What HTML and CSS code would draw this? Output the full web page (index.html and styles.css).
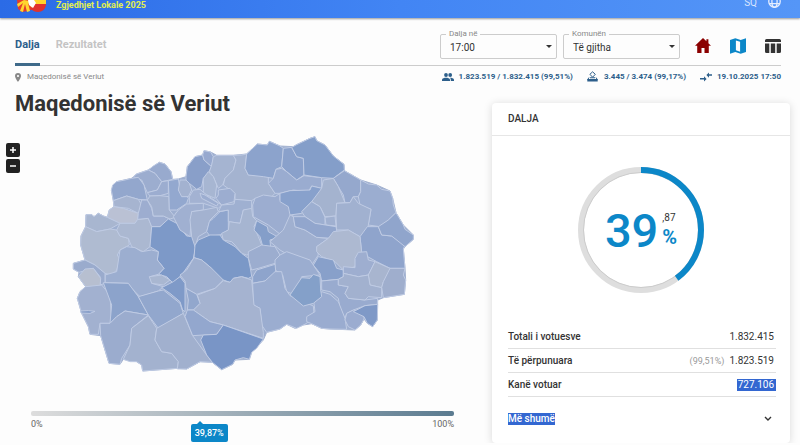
FILE: index.html
```
<!DOCTYPE html>
<html lang="sq">
<head>
  <meta charset="UTF-8" />
  <meta name="viewport" content="width=device-width, initial-scale=1.0" />
  <title>Zgjedhjet Lokale 2025</title>
  <link rel="stylesheet" href="styles.css">
</head>
<body>
  <!-- Header -->
  <header class="header">
    <svg class="logo" viewBox="0 0 32 14" aria-hidden="true">
      <path d="M1 0h17v9l-6 2-6 1-4-3z" fill="#e33a2e"/>
      <path d="M8 0l-7 4 1 3 5-4-3 8 3 1 2-8 2 8 3-1-2-8 4 5 2-3-5-4z" fill="#ffd52e"/>
      <path d="M17 0h13v4H17z" fill="#ffd52e"/>
      <path d="M17 4h13c0 5-4 8-8 8-3 0-5-1-7-3z" fill="#e0332f"/>
      <path d="M12 0h6l2 3-3 5-4-3z" fill="#fff"/>
    </svg>
    <span class="site-title">Zgjedhjet Lokale 2025</span>
    <span class="lang">SQ</span>
    <svg class="globe" viewBox="0 0 12 12" aria-hidden="true">
      <g fill="none" stroke="#e4edff" stroke-width="1.2">
        <circle cx="6" cy="6" r="5.3"/>
        <ellipse cx="6" cy="6" rx="2.4" ry="5.3"/>
        <path d="M1 4h10M1 8h10"/>
      </g>
    </svg>
  </header>

  <!-- Tabs and filters -->
  <div class="toolbar">
    <nav class="tabs">
      <a href="#dalja" class="tab active">Dalja</a>
      <a href="#rezultatet" class="tab">Rezultatet</a>
    </nav>
    <div class="filters">
      <div class="field">
        <label for="ora">Dalja në</label>
        <select id="ora"><option>17:00</option></select>
      </div>
      <div class="field">
        <label for="komuna">Komunën</label>
        <select id="komuna"><option>Të gjitha</option></select>
      </div>
    </div>
    <div class="views">
      <a href="#home" aria-label="Home"><svg viewBox="0 0 16 16"><path d="M8 0L0 7.800h2.200V15h4.300v-5h3v5h4.300V7.800H16l-2.600-2.500V1.200h-2v2.100z" fill="#8b0000"/></svg></a>
      <a href="#map" aria-label="Harta"><svg viewBox="0 0 16 16"><path fill-rule="evenodd" d="M0 2L5.300.3l5.400 1.800L16 .3V14l-5.300 1.700L5.300 14 0 15.700zM5.900 2.400v9.900l4.200 1.400V3.800z" fill="#0c87c8"/></svg></a>
      <a href="#table" aria-label="Tabela"><svg viewBox="0 0 16 16"><path d="M0 4V2.500Q0 1 1.500 1h13Q16 1 16 2.500V4zM0 5.500h4.300V15H1.500Q0 15 0 13.500zM5.800 5.500h4.400V15H5.800zM11.700 5.500H16v8q0 1.500-1.500 1.500h-2.800z" fill="#333"/></svg></a>
    </div>
  </div>

  <!-- Breadcrumb and status -->
  <div class="info">
    <span class="place">
      <svg class="pin" viewBox="0 0 6 9"><path fill-rule="evenodd" d="M3 0a3 3 0 0 0-3 3c0 2 3 6 3 6s3-4 3-6a3 3 0 0 0-3-3zm0 1.900a1.100 1.100 0 1 1 0 2.200 1.100 1.100 0 0 1 0-2.200z" fill="#888"/></svg>
      Maqedonisë së Veriut
    </span>
    <div class="stats">
      <span class="stat">
        <svg viewBox="0 0 12 12"><g fill="#2d5f8b"><circle cx="4" cy="4" r="1.900"/><circle cx="8.200" cy="4" r="1.900"/><path d="M0 10V8.700C0 7.300 2.500 6.700 4 6.700s4 .6 4 2V10zM8.800 10V8.700c0-.8-.4-1.400-.9-1.900 1.700 0 4.100.6 4.100 1.900V10z"/></g></svg>
        1.823.519 / 1.832.415 (99,51%)
      </span>
      <span class="stat">
        <svg viewBox="0 0 12 12"><path d="M2 6.500L.8 8.500h9.400L9 6.500" fill="none" stroke="#2d5f8b"/><path d="M5.600.8l2.700 2.500-2.700 2.900-2.700-2.900z" fill="none" stroke="#2d5f8b"/><path d="M.3 8h10.400v2.500H.3zM3 6.300h5v1H3z" fill="#2d5f8b"/></svg>
        3.445 / 3.474 (99,17%)
      </span>
      <span class="stat">
        <svg viewBox="0 0 12 12"><path d="M0 7h4V5.300L6.600 7.900 4 10.500V8.600H0zM12.500 3.200H9V1.500L6.400 4.100 9 6.700V4.700h3.500z" fill="#2d5f8b"/></svg>
        19.10.2025 17:50
      </span>
    </div>
  </div>

  <main class="content">
    <section class="map-panel">
      <h1>Maqedonisë së Veriut</h1>
      <div class="zoom-buttons">
        <button type="button" aria-label="Zoom in"><svg viewBox="0 0 8 8"><path d="M1 4h6M4 1v6" stroke="#fff" stroke-width="1.500"/></svg></button>
        <button type="button" aria-label="Zoom out"><svg viewBox="0 0 8 8"><path d="M1 4h6" stroke="#fff" stroke-width="1.500"/></svg></button>
      </div>

      <svg class="map" viewBox="210 390 1050 750" role="img" aria-label="Harta e komunave">
        <path class="land" d="M242 735L243 708 257 680 258 644 275 644 282 650 295 640 310 648 322 652 328 630 342 620 340 602 334 570 350 545 395 535 410 522 445 510 478 487 495 492 513 515 518 538 535 537 558 530 562 500 585 470 608 465 612 452 632 456 650 466 700 466 740 462 755 448 772 432 802 435 808 424 840 438 880 440 890 434 930 415 945 410 950 422 975 435 1000 468 1032 493 1033 512 1082 540 1130 555 1170 573 1178 595 1188 638 1210 675 1240 705 1240 718 1215 740 1210 747 1215 805 1217 840 1213 883 1150 893 1133 900 1132 960 1118 980 1102 970 1092 957 1082 975 1065 990 990 987 965 985 935 971 910 975 885 985 860 973 840 987 800 997 790 1020 755 1057 748 1078 705 1080 698 1093 665 1109 637 1087 600 1085 560 1107 532 1105 428 1113 425 1095 410 1085 370 1078 360 1093 327 1090 302 1007 270 1003 265 980 245 940 232 895 240 875 257 860 235 830 237 817 220 807 220 790 255 780z"/>
        <!-- North-west -->
        <g transform="translate(210 390)">
          <path fill="#98aace" d="M235 120L250 108 268 97 285 102 303 125 308 148 290 152 275 155 255 130z"/>
          <path fill="#9cadcf" d="M190 140L200 132 235 120 255 130 275 155 262 180 232 188 215 150z"/>
          <path fill="#93a7cd" d="M130 212L124 180 128 165 140 155 165 150 185 145 205 142 222 165 232 210 205 208 170 198 135 210z"/>
          <path fill="#9cadd0" d="M232 188L262 180 275 155 295 152 295 190 270 197 240 198z"/>
          <path fill="#a6b4d0" d="M132 230L130 212 170 198 205 208 215 225 205 250 175 235z"/>
          <path fill="#bac1d4" d="M112 262L118 240 132 230 160 235 205 250 203 268 195 280 150 280z"/>
          <path fill="#a8b6d0" d="M47 290L48 254 65 254 72 260 85 250 100 258 112 262 150 280 120 297 80 305z"/>
          <path fill="#afbbd1" d="M32 345L33 318 47 290 80 305 120 297 140 300 150 318 175 325 178 345 150 360 142 375 150 390 140 420 125 435 105 430 75 405 45 390z"/>
          <path fill="#abb8d1" d="M150 280L195 280 203 268 235 265 245 290 240 350 220 365 185 350 175 325 150 318 140 300z"/>
          <path fill="#9dadd0" d="M215 210L232 210 245 235 250 258 280 258 300 267 270 290 245 290 235 265 203 268 205 250z"/>
          <path fill="#a2b1cf" d="M240 198L270 197 297 200 298 240 316 262 300 267 280 258 250 258 245 230 232 210z"/>
          <path fill="#93a8cf" d="M295 152L325 147 330 175 345 190 355 205 350 220 320 240 298 240 297 200z"/>
          <path fill="#9aacd0" d="M316 250L350 225 365 222 365 325 350 318 320 280z"/>
          <path fill="#7d99c8" d="M245 290L270 290 295 267 320 280 350 318 378 320 378 350 370 385 335 435 310 460 290 440 265 433 282 415 262 390 265 365 240 350z"/>
        </g>
        <!-- Skopje and the north -->
        <g transform="translate(540 390)">
          <path fill="#a3b2d0" d="M0 150L18 150 28 160 35 180 25 200 5 200 -5 180z"/>
          <path fill="#899fc9" d="M18 150L18 140 22 110 45 80 68 75 72 90 95 110 85 130 70 145 65 170 50 178 28 160z"/>
          <path fill="#97a9cf" d="M68 75L72 62 92 66 100 80 95 110 72 90z"/>
          <path fill="#a5b4d1" d="M100 80L110 76 160 76 168 90 160 120 135 145 128 165 115 175 100 140 88 125 95 105z"/>
          <path fill="#a4b3d0" d="M160 76L185 75 200 72 195 115 205 135 265 135 265 160 285 190 270 205 225 205 215 212 165 210 165 190 130 165 135 145 160 120 168 90z"/>
          <path fill="#8ca3cc" d="M200 72L215 58 232 42 262 45 268 34 300 48 310 55 305 110 288 118 280 145 250 140 205 135 195 115z"/>
          <path fill="#8aa1cb" d="M310 55L335 52 350 80 370 85 372 135 350 150 320 125 305 110z"/>
          <path fill="#9aacd0" d="M288 118L305 115 320 125 350 150 372 137 425 143 425 175 395 168 385 185 340 180 300 190 285 190 265 160 280 145z"/>
          <path fill="#9cadd0" d="M225 205L250 195 285 200 300 190 300 210 325 230 345 270 310 320 265 285 220 260 218 225z"/>
          <path fill="#a7b6d2" d="M70 145L85 125 100 140 110 165 105 205 70 190z"/>
          <path fill="#9cadd0" d="M115 180L150 175 165 190 162 215 125 225 108 205 115 195z"/>
          <path fill="#a3b2d2" d="M28 200L40 180 60 178 80 195 125 225 115 235 70 220 28 220z"/>
          <path fill="#9cadd0" d="M60 190L75 195 115 220 110 228 65 205z"/>
          <path fill="#a0b0d1" d="M-5 240L20 222 70 220 70 240 35 245 30 320 0 300 -20 260z"/>
          <path fill="#a3b2d0" d="M35 245L70 240 110 232 115 245 90 270 80 305 55 320 45 350 35 320 30 270z"/>
          <path fill="#8fa5cd" d="M100 265L120 245 145 240 145 300 120 315 90 318 80 305 88 275z"/>
          <path fill="#9fb0d1" d="M125 225L162 222 165 208 215 212 215 240 190 240 180 280 145 275 145 240 115 245z"/>
          <path fill="#a6b5d1" d="M215 235L218 260 230 272 222 290 235 320 245 345 220 370 200 375 185 370 165 345 155 335 130 330 125 310 145 300 148 275 180 280 190 240z"/>
          <path fill="#849ec9" d="M230 272L262 290 265 305 295 322 270 330 272 355 250 355 240 320 222 300z"/>
        </g>
        <!-- North-east -->
        <g transform="translate(870 390)">
          <path fill="#849ec9" d="M5 52L20 44 60 25 75 20 80 32 105 45 130 78 162 103 163 120 130 145 95 143 42 135 40 85 20 80z"/>
          <path fill="#88a1cc" d="M-30 190L0 182 60 180 65 168 95 175 85 200 65 215 40 240 35 250 0 255 -5 230 -30 215z"/>
          <path fill="#95a8cd" d="M163 122L212 150 212 185 205 200 190 200 180 218 165 218 160 195 145 170 130 145z"/>
          <path fill="#9badd0" d="M212 150L235 162 260 165 275 178 300 183 308 205 310 225 318 248 295 270 270 290 235 285 243 238 210 225 205 200 212 185z"/>
          <path fill="#a4b3cf" d="M100 150L130 145 145 170 165 218 140 220 138 258 105 260 90 230 65 215 95 175z"/>
          <path fill="#a1b1d0" d="M140 220L180 218 190 200 205 220 243 238 235 285 232 310 210 320 175 300 140 300 138 258z"/>
          <path fill="#9dafd1" d="M65 215L90 230 105 262 105 285 75 280 45 260 35 245z"/>
          <path fill="#a0b0d0" d="M105 262L135 258 138 288 108 285z"/>
          <path fill="#a0b0d0" d="M0 255L10 260 15 290 45 300 80 322 115 325 80 350 85 375 65 405 20 390 -30 360 -60 335 -20 300z"/>
          <path fill="#92a6cd" d="M10 260L45 260 75 280 138 290 140 300 125 325 80 322 45 300 15 290z"/>
          <path fill="#8fa4cc" d="M232 290L265 290 275 315 305 318 345 345 340 357 345 415 300 415 260 395 215 370 210 320z"/>
          <path fill="#90a5cc" d="M318 248L340 285 345 298 370 315 370 328 345 350 305 318 275 315 265 290 295 270z"/>
          <path fill="#adb9d1" d="M80 350L115 325 130 305 175 300 210 320 215 365 200 385 195 410 160 420 135 395 95 380 80 365z"/>
        </g>
        <!-- South-west -->
        <g transform="translate(210 735)">
          <path fill="#9caed0" d="M150 15L170 5 195 8 215 20 245 15 265 20 262 45 282 70 265 88 240 95 245 115 280 125 265 138 210 155 185 130 175 115 105 113 105 90 140 80z"/>
          <path fill="#9aabcd" d="M10 72L10 55 45 45 75 60 105 85 105 115 90 120 90 95 70 70 27 82z"/>
          <path fill="#b7bfd0" d="M25 95L45 72 70 70 92 100 90 125 47 125z"/>
          <path fill="#a2b1d0" d="M22 160L30 140 47 125 95 120 120 150 125 235 90 235 85 268 60 268 55 245 35 205z"/>
          <path fill="#8ca3cb" d="M100 113L175 115 205 155 235 210 165 198 140 215 120 235 125 180z"/>
          <path fill="#92a7cd" d="M205 155L265 138 280 135 330 175 340 205 265 250 235 210z"/>
          <path fill="#a9b7d1" d="M238 95L275 90 300 105 280 120 245 115z"/>
          <path fill="#7f9ac8" d="M275 128L310 110 330 95 345 115 345 200 338 195 330 170 300 145z"/>
          <path fill="#7f98c5" d="M32 198L55 197 75 199 60 205 33 204z"/>
          <path fill="#9bacce" d="M90 235L120 235 140 215 165 198 235 210 185 250 180 300 155 340 150 358 117 355 92 272z"/>
          <path fill="#a3b2cf" d="M185 250L235 212 260 250 255 285 275 320 305 325 325 350 322 370 218 378 215 360 200 350 180 350 160 343 180 300z"/>
          <path fill="#a1b0ce" d="M260 250L340 205 368 272 410 330 427 352 390 350 350 372 322 372 325 350 305 325 275 320 255 285z"/>
        </g>
        <!-- Centre and south -->
        <g transform="translate(540 735)">
          <path fill="#9cadcf" d="M205 40L205 20 245 0 285 5 300 30 285 55 235 70 215 75z"/>
          <path fill="#7b98c7" d="M45 0L55 -15 90 -30 120 -30 130 -15 165 5 185 25 205 40 212 75 215 95 205 100 185 95 160 100 150 112 130 105 105 90 95 70 65 45 42 38z"/>
          <path fill="#9badd0" d="M300 30L320 20 390 45 400 60 420 90 365 95 345 150 320 140 308 90 285 75 285 45z"/>
          <path fill="#8ea4cc" d="M218 95L230 75 285 58 288 85 255 108 218 115z"/>
          <path fill="#9badd0" d="M218 115L255 108 285 80 305 80 315 130 330 152 400 183 402 205 380 235 350 250 320 238 300 252 260 262 245 240 240 190 220 180z"/>
          <path fill="#a5b3d0" d="M52 150L105 130 130 107 150 112 160 100 185 95 215 105 222 180 240 190 250 262 250 280 130 240 90 230 40 195 60 175z"/>
          <path fill="#a0b0d0" d="M42 38L65 45 95 70 130 105 105 130 50 148 18 130 15 108 0 90 20 75z"/>
          <path fill="#92a7cd" d="M18 130L50 148 60 175 40 195 22 195 25 165z"/>
          <path fill="#93a7ce" d="M22 195L40 195 90 230 130 240 110 268 70 270 38 272 15 215z"/>
          <path fill="#7995c6" d="M70 270L110 268 130 240 250 282 230 310 215 322 208 343 190 338 165 345 158 358 125 374 97 352 80 330 62 285z"/>
        </g>
        <!-- South-east -->
        <g transform="translate(870 735)">
          <path fill="#88a0ca" d="M70 60L85 35 130 45 140 70 160 75 160 95 145 103 95 108 90 85z"/>
          <path fill="#9eaed0" d="M160 65L195 68 195 40 205 22 230 20 235 45 255 50 235 90 205 95 160 85z"/>
          <path fill="#a8b5cf" d="M255 50L300 70 300 85 280 110 275 128 240 120 235 90z"/>
          <path fill="#9faecd" d="M300 70L345 70 340 90 347 105 343 148 280 158 275 128 280 110z"/>
          <path fill="#99abcf" d="M95 108L145 103 145 120 175 125 165 145 175 160 225 165 263 160 262 178 225 182 190 195 170 205 165 220 150 190 145 160 120 140 95 135z"/>
          <path fill="#a2b1cf" d="M160 85L205 95 235 90 240 120 275 128 275 158 235 155 225 165 175 160 165 145 175 125 145 120 145 103 160 95z"/>
          <path fill="#9aacd0" d="M95 140L120 148 145 170 165 220 170 253 120 252 95 250 65 236 50 230 50 215 75 200 72 175z"/>
          <path fill="#9bacd0" d="M170 205L190 195 222 215 222 222 212 240 195 255 175 245 165 225z"/>
          <path fill="#7f99c7" d="M225 182L263 178 262 225 248 245 232 235 222 215 190 200z"/>
          <path fill="#84a0c9" d="M0 150L20 120 35 98 60 100 70 88 90 95 92 135 95 155 70 175 40 183z"/>
        </g>
      </svg>

      <div class="scale">
        <div class="scale-bar"></div>
        <div class="scale-labels"><span>0%</span><span>100%</span></div>
        <div class="marker" style="left: 39.87%">39,87%</div>
      </div>
    </section>

    <!-- Turnout card -->
    <section class="card">
      <h2>DALJA</h2>
      <div class="donut">
        <svg viewBox="0 0 126 126" aria-hidden="true">
          <circle class="track" cx="63" cy="63" r="60"/>
          <circle class="track-inner" cx="63" cy="63" r="57.500"/>
          <circle class="progress" cx="63" cy="63" r="60" pathLength="100" stroke-dasharray="39.87 100" transform="rotate(-90 63 63)"/>
        </svg>
        <div class="percent">
          <span class="whole">39</span>
          <span class="rest"><span class="decimals">,87</span><span class="sign">%</span></span>
        </div>
      </div>
      <dl class="totals">
        <div class="row"><dt>Totali i votuesve</dt><dd>1.832.415</dd></div>
        <div class="row"><dt>Të përpunuara</dt><dd><small>(99,51%)</small>1.823.519</dd></div>
        <div class="row"><dt>Kanë votuar</dt><dd class="selected">727.106</dd></div>
      </dl>
      <button type="button" class="more">
        <span class="selected">Më shumë</span>
        <svg viewBox="0 0 8 6"><path d="M1 1l3 3 3-3" fill="none" stroke="#333" stroke-width="1.400"/></svg>
      </button>
    </section>
  </main>
</body>
</html>
```

FILE: styles.css
```
* {
  box-sizing: border-box;
}
body {
  margin: 0;
  background: #fdfdfd;
  color: #333;
  font-family: Roboto, Arial, sans-serif;
  font-size: 10px;
}
svg {
  display: block;
}
a {
  text-decoration: none;
}

/* ===== Header ===== */
.header {
  display: flex;
  align-items: flex-start;
  height: 18px;
  padding: 0 19px 0 16px;
  background: linear-gradient(90deg, #2b6be6, #4285f4 50%, #5596f7);
  box-shadow: 0 1px 2px rgba(0, 0, 0, 0.4);
  line-height: 11px;
}
.logo {
  width: 32px;
  height: 14px;
}
.site-title {
  margin-left: 8px;
  color: #e3f04d;
  font-size: 9px;
  font-weight: 700;
}
.lang {
  margin: -3px 11px 0 auto;
  color: #d8e6ff;
}
.globe {
  width: 13px;
  height: 13px;
  margin-top: -5px;
}

/* ===== Tabs and filters ===== */
.toolbar {
  display: flex;
  height: 48px;
  margin: 0 19px 0 15px;
  border-bottom: 1px solid #ccc;
}
.tabs {
  display: flex;
  gap: 16px;
  margin-right: auto;
}
.tab {
  height: 48px;
  padding-top: 4px;
  color: #c4c4c4;
  font-size: 11px;
  font-weight: 700;
  line-height: 46px;
}
.tab.active {
  color: #2d5f8b;
  border-bottom: 3px solid #3f6a8a;
}
.filters {
  display: flex;
  gap: 6px;
  padding-top: 16px;
}
.field {
  position: relative;
  width: 117px;
}
.field label {
  position: absolute;
  top: -5px;
  left: 6px;
  padding: 0 3px;
  background: #fdfdfd;
  color: #888;
  font-size: 8px;
  line-height: 10px;
}
.field select {
  width: 100%;
  height: 25px;
  padding: 2px 9px 0;
  border: 1px solid #ccc;
  border-radius: 2px;
  background: transparent;
  color: #333;
  font: 10px Roboto, Arial, sans-serif;
  appearance: none;
}
.field::after {
  content: "";
  position: absolute;
  top: 11px;
  right: 5px;
  border: 3px solid transparent;
  border-top-color: #333;
  border-bottom: 0;
}
.views {
  display: flex;
  gap: 19px;
  padding: 20px 0 0 15px;
}
.views svg {
  width: 16px;
  height: 16px;
}

/* ===== Breadcrumb and status ===== */
.info {
  display: flex;
  justify-content: space-between;
  height: 22px;
  margin: 0 19px 0 15px;
  font-size: 8px;
  line-height: 22px;
}
.place {
  display: flex;
  align-items: center;
  gap: 6px;
  color: #888;
}
.pin {
  width: 6px;
  height: 9px;
}
.stats {
  display: flex;
  gap: 14px;
  color: #2d5f8b;
  font-weight: 700;
}
.stat {
  display: flex;
  align-items: center;
  gap: 5px;
}
.stat svg {
  width: 12px;
  height: 12px;
}

/* ===== Map ===== */
.content {
  display: grid;
  grid-template-columns: 1fr 298px;
  gap: 12px;
  padding: 0 10px 0 15px;
}
.map-panel {
  position: relative;
}
h1 {
  margin: 0;
  padding-top: 2px;
  font-size: 22px;
  font-weight: 700;
  line-height: 28px;
}
.zoom-buttons {
  position: absolute;
  top: 55px;
  left: -9px;
  display: grid;
  gap: 2px;
}
.zoom-buttons button {
  width: 14px;
  height: 14px;
  padding: 3px;
  border: 0;
  border-radius: 2px;
  background: #222;
}
.map {
  width: calc(100% - 115px);
  margin: 12px 60px 0 55px;
  stroke: #bfcbe4;
  stroke-width: 3;
  stroke-linejoin: round;
}
.land {
  fill: #9eafd0;
  stroke: #a3b2d0;
}
.scale {
  position: relative;
  margin: 31px 26px 0 16px;
}
.scale-bar {
  height: 5px;
  border-radius: 2px;
  background: linear-gradient(90deg, #ddd, #5b7b90);
}
.scale-labels {
  display: flex;
  justify-content: space-between;
  color: #666;
  font-size: 9px;
  line-height: 16px;
}
.marker {
  position: absolute;
  top: 13px;
  margin-left: -9px;
  padding: 0 4px;
  border-radius: 2px;
  background: #0c87c8;
  color: #fff;
  font-size: 9px;
  font-weight: 500;
  line-height: 18px;
}
.marker::before {
  content: "";
  position: absolute;
  top: -3px;
  left: 6px;
  border: 3px solid transparent;
  border-top: 0;
  border-bottom-color: #0c87c8;
}

/* ===== Turnout card ===== */
.card {
  margin-top: 15px;
  padding-bottom: 18px;
  border-radius: 4px;
  background: #fff;
  box-shadow: 0 1px 8px rgba(0, 0, 0, 0.15);
}
h2 {
  margin: 0;
  padding: 0 16px;
  border-bottom: 1px solid #e6e6e6;
  font-size: 10px;
  font-weight: 500;
  line-height: 32px;
}
.donut {
  position: relative;
  width: 126px;
  margin: 31px auto 0;
}
.donut circle {
  fill: none;
  stroke-width: 6;
}
.donut .track {
  stroke: #dedede;
}
.donut .track-inner {
  stroke: #ccc;
  stroke-width: 1;
}
.donut .progress {
  stroke: #0c87c8;
}
.percent {
  position: absolute;
  inset: 0;
  display: flex;
  justify-content: center;
  align-items: center;
  gap: 4px;
  color: #0c87c8;
}
.whole {
  font-size: 47px;
  font-weight: 500;
}
.rest {
  display: grid;
}
.decimals {
  color: #333;
  font-size: 10px;
  line-height: 14px;
}
.sign {
  font-size: 20px;
  font-weight: 700;
  line-height: 24px;
}
.totals {
  margin: 32px 14px 0 16px;
}
.row {
  display: flex;
  justify-content: space-between;
  align-items: center;
  height: 24px;
  border-bottom: 1px solid #e0e0e0;
}
dt {
  font-size: 10px;
  font-weight: 500;
}
dd {
  margin: 0;
  padding: 0 2px 0 1px;
  font-size: 10px;
  line-height: 12px;
}
dd small {
  margin-right: 5px;
  color: #999;
  font-size: 9px;
}
.selected {
  background: #3367d1;
  color: #fff;
}
.more {
  display: flex;
  justify-content: space-between;
  align-items: center;
  width: 100%;
  margin-top: 16px;
  padding: 0 18px 0 16px;
  border: 0;
  background: none;
  font: 500 10px/12px Roboto, Arial, sans-serif;
}
.more svg {
  width: 8px;
  height: 6px;
}
```
